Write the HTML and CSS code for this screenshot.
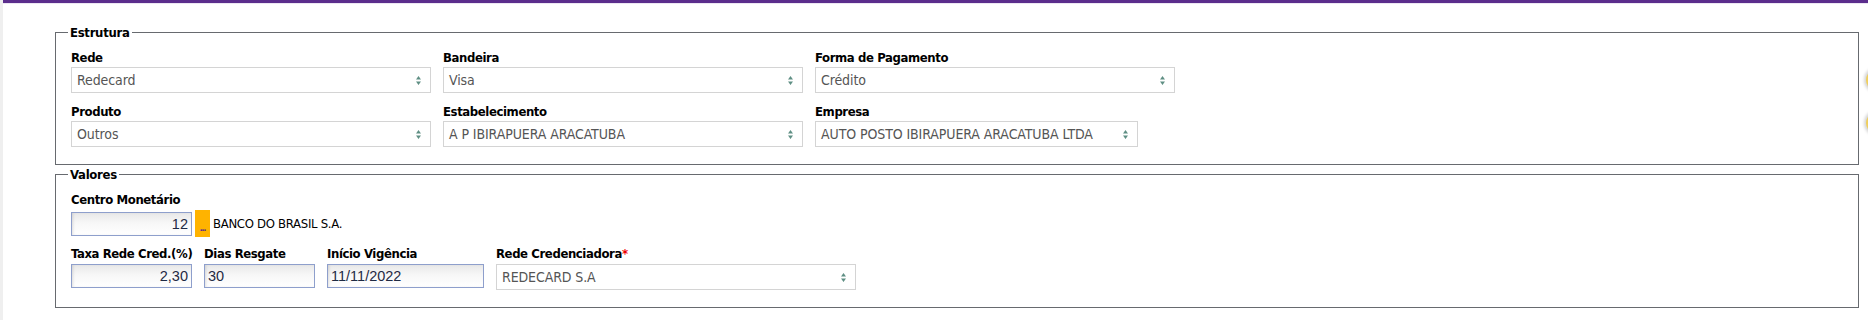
FILE: index.html
```html
<!DOCTYPE html>
<html lang="pt-BR">
<head>
    <meta charset="UTF-8">
    <meta name="viewport" content="width=device-width, initial-scale=1.0">
    <link rel="stylesheet" href="styles.css">
    <title>Rede Credenciadora</title>
</head>
<body>
    <div class="shell">
        <div class="topbar"></div>
        <div class="content">
            <fieldset class="group group-estrutura">
                <legend>Estrutura</legend>
                <div class="grid">
                    <div class="field">
                        <label>Rede</label>
                        <div class="select"><span>Redecard</span><svg class="arrows" width="5" height="9" viewBox="0 0 5 9"><path d="M2.5 0L5 3.6H0Z M2.5 9L0 5.4H5Z"/></svg></div>
                    </div>
                    <div class="field">
                        <label>Bandeira</label>
                        <div class="select"><span>Visa</span><svg class="arrows" width="5" height="9" viewBox="0 0 5 9"><path d="M2.5 0L5 3.6H0Z M2.5 9L0 5.4H5Z"/></svg></div>
                    </div>
                    <div class="field">
                        <label>Forma de Pagamento</label>
                        <div class="select"><span>Crédito</span><svg class="arrows" width="5" height="9" viewBox="0 0 5 9"><path d="M2.5 0L5 3.6H0Z M2.5 9L0 5.4H5Z"/></svg></div>
                    </div>
                    <div class="field">
                        <label>Produto</label>
                        <div class="select"><span>Outros</span><svg class="arrows" width="5" height="9" viewBox="0 0 5 9"><path d="M2.5 0L5 3.6H0Z M2.5 9L0 5.4H5Z"/></svg></div>
                    </div>
                    <div class="field">
                        <label>Estabelecimento</label>
                        <div class="select"><span>A P IBIRAPUERA ARACATUBA</span><svg class="arrows" width="5" height="9" viewBox="0 0 5 9"><path d="M2.5 0L5 3.6H0Z M2.5 9L0 5.4H5Z"/></svg></div>
                    </div>
                    <div class="field">
                        <label>Empresa</label>
                        <div class="select select-empresa"><span>AUTO POSTO IBIRAPUERA ARACATUBA LTDA</span><svg class="arrows" width="5" height="9" viewBox="0 0 5 9"><path d="M2.5 0L5 3.6H0Z M2.5 9L0 5.4H5Z"/></svg></div>
                    </div>
                </div>
            </fieldset>

            <fieldset class="group group-valores">
                <legend>Valores</legend>
                <div class="field">
                    <label>Centro Monetário</label>
                    <div class="lookup">
                        <input class="input w-taxa num" type="text" value="12">
                        <button class="btn-lookup" type="button">...</button>
                        <span class="lookup-text">BANCO DO BRASIL S.A.</span>
                    </div>
                </div>
                <div class="row">
                    <div class="field w-taxa">
                        <label>Taxa Rede Cred.(%)</label>
                        <input class="input w-taxa num" type="text" value="2,30">
                    </div>
                    <div class="field w-dias">
                        <label>Dias Resgate</label>
                        <input class="input w-dias" type="text" value="30">
                    </div>
                    <div class="field w-data">
                        <label>Início Vigência</label>
                        <input class="input w-data" type="text" value="11/11/2022">
                    </div>
                    <div class="field w-rede">
                        <label>Rede Credenciadora<span class="req">*</span></label>
                        <div class="select w-rede"><span>REDECARD S.A</span><svg class="arrows" width="5" height="9" viewBox="0 0 5 9"><path d="M2.5 0L5 3.6H0Z M2.5 9L0 5.4H5Z"/></svg></div>
                    </div>
                </div>
            </fieldset>
        </div>

        <!-- side buttons, cut by the window edge -->
        <div class="side-btn side-btn-1"></div>
        <div class="side-btn side-btn-2"></div>
    </div>
</body>
</html>
```

FILE: styles.css
```css
html, body {
    margin: 0;
    background: #fff;
    overflow: hidden;
}

body {
    font-family: "Liberation Sans Narrow", "DejaVu Sans Condensed", "Liberation Sans", sans-serif;
    font-size: 14px;
    color: #000;
}

.shell {
    position: relative;
    height: 320px;
    border-left: 3px solid #efefef;
}

.topbar {
    height: 3px;
    background: #5b2d8c;
    border-bottom: 1px solid #ece6f3;
}

.content {
    padding: 20px 9px 0 52px;
}

/* fieldsets */
.group {
    margin: 0;
    padding: 8px 15px 17px;
    border: 1px solid #676a6f;
}

.group-valores {
    margin-top: 1px;
}

.group legend {
    margin-left: -3px;
    padding: 0 2px;
    font-size: 13px;
    font-weight: bold;
    letter-spacing: -0.3px;
    line-height: 17px;
}

.grid {
    display: grid;
    grid-template-columns: repeat(3, 360px);
    column-gap: 12px;
    row-gap: 10px;
}

.field label {
    display: block;
    font-size: 13px;
    font-weight: bold;
    letter-spacing: -0.4px;
    line-height: 17px;
    margin-bottom: 1px;
    white-space: nowrap;
}

.group-valores .field label {
    margin-bottom: 2px;
}

.req {
    color: #e00;
}

/* fake selects */
.select {
    box-sizing: border-box;
    height: 26px;
    display: flex;
    align-items: center;
    justify-content: space-between;
    padding: 0 9px 0 5px;
    border: 1px solid #d4d4d4;
    background: #fff;
    color: #555;
    letter-spacing: -0.1px;
    white-space: nowrap;
}

.select-empresa {
    width: 323px;
}

.arrows {
    fill: #5f8f84;
    flex-shrink: 0;
}

/* inputs */
.input {
    box-sizing: border-box;
    display: block;
    height: 24px;
    margin: 0;
    padding: 0 3px;
    border: 1px solid #8e9fcc;
    border-radius: 0;
    background: linear-gradient(to bottom, #e8e8e8 0%, #f7f7f7 45%, #fff 100%);
    box-shadow: inset 2px 0 3px -1px rgba(0, 0, 0, 0.12);
    font-family: "Liberation Sans", Arial, sans-serif;
    font-size: 14.5px;
    color: #1f2a44;
    outline: none;
}

.num {
    text-align: right;
}

.w-taxa { width: 121px; }
.w-dias { width: 111px; }
.w-data { width: 157px; }
.w-rede { width: 360px; }

.lookup {
    display: flex;
    align-items: center;
    height: 27px;
}

.btn-lookup {
    box-sizing: border-box;
    width: 15px;
    height: 27px;
    margin-left: 3px;
    padding: 8px 0 0;
    border: none;
    background: #ffb300;
    color: #5b2d8c;
    font-family: "Liberation Sans", Arial, sans-serif;
    font-size: 10px;
    font-weight: bold;
    letter-spacing: -1px;
    line-height: 10px;
}

.lookup-text {
    margin-left: 3px;
    font-size: 13px;
    letter-spacing: -0.3px;
    color: #000;
}

.row {
    display: flex;
    gap: 12px;
    margin-top: 8px;
}

/* round buttons on the right edge */
.side-btn {
    position: absolute;
    right: -20px;
    width: 22px;
    height: 22px;
    border-radius: 50%;
    background: #f0cf5c;
    box-shadow: 0 0 3px 2px #d6d6d6;
}

.side-btn-1 { top: 69px; }
.side-btn-2 { top: 112px; }
```
